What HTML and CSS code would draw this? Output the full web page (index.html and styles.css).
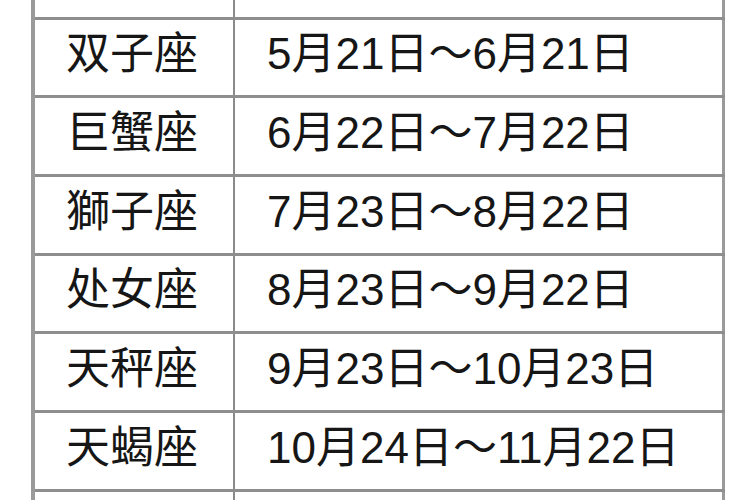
FILE: index.html
```html
<!DOCTYPE html>
<html lang="zh-CN">
<head>
<meta charset="utf-8">
<title>星座日期表</title>
<link rel="stylesheet" href="styles.css">
</head>
<body>
<div class="viewport">
  <table class="zodiac">
    <tbody>
      <tr><td class="name">金牛座</td><td class="date">4月20日～5月20日</td></tr>
      <tr><td class="name">双子座</td><td class="date">5月21日～6月21日</td></tr>
      <tr><td class="name">巨蟹座</td><td class="date">6月22日～7月22日</td></tr>
      <tr><td class="name">獅子座</td><td class="date">7月23日～8月22日</td></tr>
      <tr><td class="name">处女座</td><td class="date">8月23日～9月22日</td></tr>
      <tr><td class="name">天秤座</td><td class="date">9月23日～10月23日</td></tr>
      <tr><td class="name">天蝎座</td><td class="date">10月24日～11月22日</td></tr>
      <tr><td class="name">射手座</td><td class="date">11月23日～12月21日</td></tr>
    </tbody>
  </table>
</div>
</body>
</html>
```

FILE: styles.css
```css
html, body {
  margin: 0;
  padding: 0;
  background: #ffffff;
}

.viewport {
  width: 750px;
  height: 500px;
  overflow: hidden;
  padding-left: 31px;
  box-sizing: border-box;
}

.zodiac {
  margin-top: -62px;
  width: 694px;
  border-collapse: collapse;
  border-left: 4px solid #9a9a9a;
  border-right: 3px solid #9a9a9a;
  font-family: "Liberation Sans", "Noto Sans CJK SC", sans-serif;
  font-size: 44px;
  color: #161616;
  table-layout: fixed;
}

.zodiac tr {
  height: 78.67px;
}

.zodiac td {
  border-top: 3px solid #8e8e8e;
  border-bottom: 3px solid #8e8e8e;
  padding-top: 0;
  padding-bottom: 6px;
  line-height: 1;
  vertical-align: middle;
  white-space: nowrap;
}

.zodiac .name {
  width: 194px;
  text-align: center;
  border-right: 2px solid #8a8a8a;
  padding-left: 0;
  padding-right: 4px;
}

.zodiac .date {
  text-align: left;
  padding-left: 32px;
  padding-right: 0;
}
```
